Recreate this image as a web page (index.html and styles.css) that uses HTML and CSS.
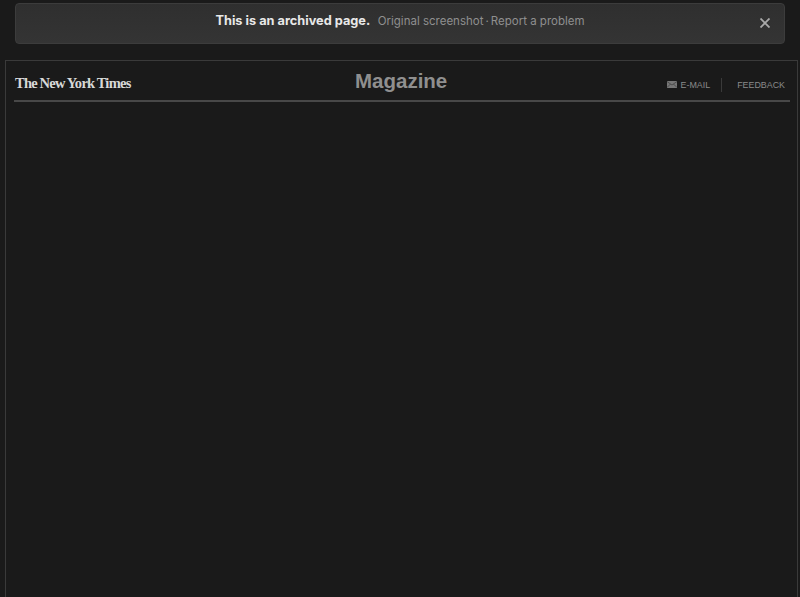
FILE: index.html
```html
<!DOCTYPE html>
<html lang="en">
<head>
<meta charset="utf-8">
<title>Magazine</title>
<link rel="stylesheet" href="styles.css">
</head>
<body>
<div class="banner">
  <div class="banner-text">
    <strong class="banner-title">This is an archived page.</strong>
    <span class="banner-links"><a>Original screenshot</a><span class="dot">·</span><a>Report a problem</a></span>
  </div>
  <svg class="close" viewBox="0 0 10 10" width="10" height="10" aria-hidden="true"><path d="M0.5 0.5L9.5 9.5M9.5 0.5L0.5 9.5"/></svg>
</div>
<div class="frame">
  <header class="masthead">
    <div class="logo">The New York Times</div>
    <div class="section">Magazine</div>
    <nav class="tools">
      <a class="tool email">
        <svg class="mail" viewBox="0 0 10 7" width="10" height="7" aria-hidden="true"><rect width="10" height="7" fill="#777"/><path d="M0 0.5L5 4L10 0.5M0 6.5L3.5 3M10 6.5L6.5 3" fill="none" stroke="#333" stroke-width="0.6"/></svg>
        E-MAIL
      </a>
      <a class="tool feedback">FEEDBACK</a>
    </nav>
  </header>
</div>
</body>
</html>
```
FILE: styles.css
```css
* { box-sizing: border-box; }
html, body { height: 100%; }
body {
  margin: 0;
  height: 597px;
  overflow: hidden;
  background: #1a1a1a;
  font-family: "Liberation Sans", Arial, sans-serif;
  display: flex;
  flex-direction: column;
}
.banner {
  position: relative;
  margin: 3px 15px 0;
  height: 41px;
  flex: none;
  background: linear-gradient(#2f2f2f, #343434);
  border: 1px solid #3c3c3c;
  border-radius: 4px;
  display: flex;
  justify-content: center;
}
.banner-text {
  font-family: Inter, "Liberation Sans", sans-serif;
  margin-top: 6px;
  line-height: 18px;
  white-space: nowrap;
}
.banner-title {
  font-size: 12.75px;
  font-weight: 700;
  color: #e8e8e8;
  margin-right: 3px;
}
.banner-links {
  font-size: 11.5px;
  color: #8f8f8f;
}
.dot { margin: 0 2px; }
.close {
  position: absolute;
  right: 14px;
  top: 14px;
  fill: none;
  stroke: #aaa;
  stroke-width: 1.8;
}
.frame {
  margin: 16px 2px 0 5px;
  flex: 1;
  border: 1px solid #3a3a3a;
  border-bottom: 0;
  padding: 0 7px 0 8px;
  background: #1a1a1a;
}
.masthead {
  height: 41px;
  border-bottom: 2px solid #484848;
  position: relative;
  display: flex;
  justify-content: space-between;
  align-items: center;
}
.logo {
  font-family: "Liberation Serif", serif;
  font-weight: 700;
  font-size: 14.5px;
  letter-spacing: -0.7px;
  word-spacing: -0.5px;
  color: #d8d8d8;
  margin-top: 5px;
  margin-left: 1px;
}
.section {
  position: absolute;
  left: 341px;
  top: 7px;
  font-size: 20.5px;
  line-height: 26px;
  font-weight: 700;
  color: #8f8f8f;
}
.tools {
  display: flex;
  align-items: center;
  margin-top: 8px;
  margin-right: 5px;
  font-size: 8.9px;
  color: #8a8a8a;
}
.tool { display: flex; align-items: center; }
.mail { margin-right: 4px; }
.email {
  padding-right: 11px;
  border-right: 1px solid #3a3a3a;
  height: 14px;
  margin-right: 15px;
}
```
